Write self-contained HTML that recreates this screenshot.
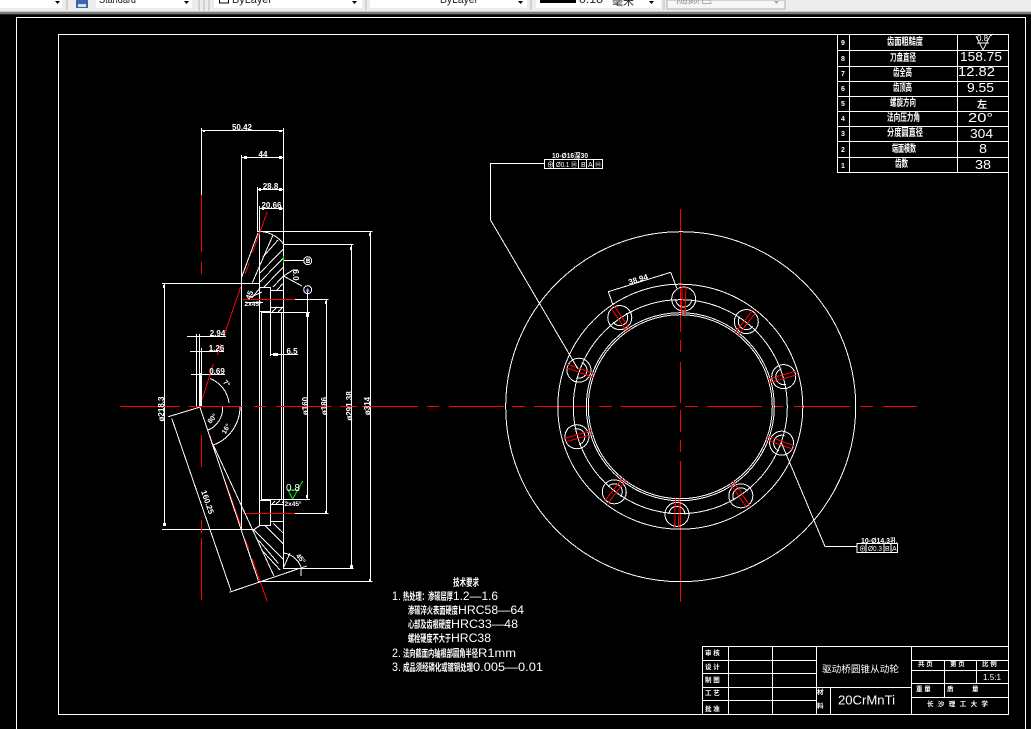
<!DOCTYPE html>
<html><head><meta charset="utf-8"><title>CAD</title>
<style>
html,body{margin:0;padding:0;background:#000;width:1031px;height:729px;overflow:hidden}
svg{display:block}
.l{stroke:#fff;stroke-width:1;fill:none;shape-rendering:crispEdges}
.a{stroke:#fff;stroke-width:1;fill:none;shape-rendering:crispEdges}
.r{stroke:#f00;stroke-width:1;fill:none;shape-rendering:crispEdges}
.rc{stroke:#f00;stroke-width:1;fill:none;shape-rendering:crispEdges}
.g{stroke:#0f0;stroke-width:1;fill:none;shape-rendering:crispEdges}
text{fill:#fff;font-family:"Liberation Sans","Noto Sans CJK SC",sans-serif}
.c{font-weight:700}
.m{text-anchor:middle}
.tb{fill:#222;font-size:11px}
</style></head><body>
<svg width="1031" height="729" viewBox="0 0 1031 729" xmlns="http://www.w3.org/2000/svg">
<defs>
<g id="h">
<circle class="a" cx="680.3" cy="299" r="12"/>
<path class="a" d="M672.3 299A8 8 0 0 0 688.3 299"/>
<path class="r" d="M678.4 286V315M682.2 286V315"/>
</g>
</defs>
<rect width="1031" height="729" fill="#000"/>
<!-- toolbar -->
<rect width="1031" height="12" fill="#ececec"/>
<rect y="11" width="1031" height="1" fill="#c8c8c8"/>
<rect y="12" width="1031" height="2" fill="#7a7a7a"/>
<rect y="14" width="1031" height="1" fill="#222"/>
<rect x="0" y="0" width="62" height="8" fill="#fff"/>
<rect x="96" y="0" width="96" height="8" fill="#fff"/>
<rect x="214" y="0" width="148" height="8" fill="#fff"/>
<rect x="370" y="0" width="157" height="8" fill="#fff"/>
<rect x="536" y="0" width="125" height="8" fill="#fff"/>
<rect x="667" y="0" width="118" height="9" fill="#f6f6f6" stroke="#b0b0b0"/>
<path d="M199 0V11M204 0V11M209 0V11M67 0V10M366 0V10M531 0V10M664 0V10" stroke="#b8b8b8" fill="none" shape-rendering="crispEdges"/>
<rect x="76" y="0" width="12" height="8" fill="#3f63a8"/>
<rect x="78" y="4" width="8" height="3" fill="#cfe0f5"/>
<path d="M55 1h5l-2.5 3zM184 1h5l-2.5 3zM352 1h5l-2.5 3zM518 1h5l-2.5 3zM649 1h5l-2.5 3z" fill="#000"/>
<path d="M774 1h5l-2.5 3z" fill="#aaa"/>
<text class="tb" x="99" y="3" textLength="37" lengthAdjust="spacingAndGlyphs">Standard</text>
<rect x="219.5" y="-4" width="9" height="7" fill="#fff" stroke="#000"/>
<text class="tb" x="232" y="3" textLength="40" lengthAdjust="spacingAndGlyphs">ByLayer</text>
<text class="tb" x="440" y="3" textLength="38" lengthAdjust="spacingAndGlyphs">ByLayer</text>
<rect x="540" y="0" width="36" height="3" fill="#000"/>
<text class="tb" x="579" y="3" textLength="24" lengthAdjust="spacingAndGlyphs">0.18</text>
<text class="tb" x="612" y="5" textLength="22" lengthAdjust="spacingAndGlyphs">毫米</text>
<text class="tb" x="676" y="3" textLength="36" lengthAdjust="spacingAndGlyphs" style="fill:#999">随颜色</text>

<!-- frames -->
<path class="l" d="M16.5 729V17.5H1025.5V729"/>
<rect class="l" x="58.5" y="34.5" width="950" height="680"/>

<!-- parameter table -->
<path class="l" d="M837.5 34.5V172.5H1008.5M849.5 34.5V172.5M957.5 34.5V172.5M837.5 50.5H1008.5M837.5 66.5H1008.5M837.5 81.5H1008.5M837.5 96.5H1008.5M837.5 111.5H1008.5M837.5 126.5H1008.5M837.5 141.5H1008.5M837.5 157.5H1008.5"/>
<g font-size="7">
<text class="c m" x="843" y="45">9</text><text class="c m" x="843" y="61">8</text><text class="c m" x="843" y="76">7</text><text class="c m" x="843" y="91">6</text><text class="c m" x="843" y="106">5</text><text class="c m" x="843" y="121">4</text><text class="c m" x="843" y="136">3</text><text class="c m" x="843" y="152">2</text><text class="c m" x="843" y="168">1</text>
</g>
<g font-size="10">
<text class="c" x="887" y="45" textLength="36" lengthAdjust="spacingAndGlyphs">齿面粗糙度</text>
<text class="c" x="890" y="61" textLength="26" lengthAdjust="spacingAndGlyphs">刀盘直径</text>
<text class="c" x="893" y="76" textLength="19" lengthAdjust="spacingAndGlyphs">齿全高</text>
<text class="c" x="893" y="91" textLength="19" lengthAdjust="spacingAndGlyphs">齿顶高</text>
<text class="c" x="890" y="106" textLength="26" lengthAdjust="spacingAndGlyphs">螺旋方向</text>
<text class="c" x="887" y="121" textLength="33" lengthAdjust="spacingAndGlyphs">法向压力角</text>
<text class="c" x="887" y="136" textLength="36" lengthAdjust="spacingAndGlyphs">分度圆直径</text>
<text class="c" x="892" y="152" textLength="24" lengthAdjust="spacingAndGlyphs">端面模数</text>
<text class="c" x="895" y="167" textLength="13" lengthAdjust="spacingAndGlyphs">齿数</text>
</g>
<g font-size="12.5">
<text x="977" y="41" font-size="8" textLength="11" lengthAdjust="spacingAndGlyphs">0.8</text>
<text x="960" y="61" textLength="42" lengthAdjust="spacingAndGlyphs">158.75</text>
<text x="958" y="76" textLength="37" lengthAdjust="spacingAndGlyphs">12.82</text>
<text x="967" y="92" textLength="27" lengthAdjust="spacingAndGlyphs">9.55</text>
<text class="c m" x="982" y="108" font-size="10">左</text>
<text x="968" y="122" textLength="25" lengthAdjust="spacingAndGlyphs">20°</text>
<text x="970" y="138" textLength="23" lengthAdjust="spacingAndGlyphs">304</text>
<text x="979" y="153" textLength="8" lengthAdjust="spacingAndGlyphs">8</text>
<text x="975" y="169" textLength="16" lengthAdjust="spacingAndGlyphs">38</text>
</g>
<path class="a" d="M976 36L983 50L990 36M977 43H989M990 36L993 34"/>

<!-- section view: dimensions -->
<path class="l" d="M201.5 128V195M283.5 128V568M201 130.5H283.5M241.5 155V530M241 157.5H283.5M257.5 187V232M257 189.5H283.5M259.5 206V526M259 208.5H283.5
M258 231.5H372.5M370.5 232V581M258 581.5H372.5M283 244.5H353.5M351.5 244V568M283 568.5H353.5M295 299.5H328.5M326.5 299V513M295 513.5H328.5M261 312.5H310M307.5 290V499M261 499.5H310
M162 283.5H260M164.5 283V526M162 529.5H255M261.5 313V500M281.5 313V500
M259.5 287.5H270.5V311.5H259.5M270.5 290.5H283M270.5 307.5H283M270.5 311V356M270 354.5H298
M259.5 500.5H270.5V525.5H259.5M270.5 504.5H283M270.5 521.5H283
M187 336.5H226M190 351.5H224M191 374.5H225M196.5 334V407M199.5 334V407M201.5 348V407M200.5 373V406"/>
<path d="M203 130h2v2h-2zM279 130h3v2h-3zM244 156h3v3h-3zM279 156h3v3h-3zM259 188h2v3h-2zM279 188h3v3h-3zM262 207h2v3h-2zM279 207h3v3h-3zM163 285h2v3h-2zM163 523h3v3h-3zM350 247h2v3h-2zM369 233h2v3h-2zM325 301h2v3h-2zM306 313h3v4h-3zM306 495h2v3h-2zM325 511h2v2h-2zM350 565h3v3h-3zM369 579h2v2h-2zM273 353h5v3h-5z" fill="#fff"/>
<!-- red axis lines -->
<path class="rc" d="M201.5 195V252M201.5 262V274M201.5 435V467M201.5 520V533M201.5 538V600"/>
<path class="r" d="M267.3 211.7L252.3 253M249.3 263L245 274M240.7 287L225 333M220.7 344L217.3 355M213.3 364L202.3 399M200 408L213 445M224 478L240.7 525M245 539L249.3 550M252.3 559L267.3 601.7"/>
<path class="rc" d="M243 299.5H295M243 513.5H295"/>
<!-- tooth -->
<path class="a" d="M258 233L241.7 277M263 232Q268 232 273 235Q279 238 283.5 244M273 235L259.3 266.7L252.3 282.7M260 288L251.7 298
M283.3 249L260 273M283.3 258L260 282M283.3 267L264 287M283.3 276L273 287M278 240L263 257M283 283.5L277 290M272 312L277 307M278 312L283 307
M283 260.5H303.5M283.5 276L293 270M283.5 276L302 286M293 270H298"/>
<circle class="a" cx="307.7" cy="260.7" r="4"/><circle class="a" cx="307.7" cy="289.7" r="4"/>
<path d="M306 259h4v1.5h-4zM306 262h4v1h-4z" fill="#6aa"/>
<path d="M307.7 287.5l2 4h-4z" fill="#7aa0ff"/>
<path class="g" d="M283.5 256V263" stroke-width="2"/>
<path class="g" d="M288 490H298M288 490L292.7 499M292.7 499L302.7 481"/>
<path class="a" d="M245 302.5H263M249 298L262 292"/>
<path class="a" d="M171.7 418.3L231 590.7M168.3 416.7L199.3 407.3M200 407.3L258.3 580.7M213.3 445L274 576M253.3 530L260 525.5M229.3 592.3L306.7 566
M265 525.7L283.3 544M273.3 523.3L283.3 533M254 530L283.3 559.3M258.3 540L278.3 563.3M263.3 551.7L280 570M283.3 568L290 553
M210 378.5A30 30 0 0 1 229 403M208.3 430A24 24 0 0 0 222.7 406.7M213.3 445A40.8 40.8 0 0 0 240 406.7M283.5 553A22 22 0 0 1 301 567M301 568V576M276 504L280 500.5M272 504L275 501M282 503L284 501"/>
<!-- center lines -->
<path class="rc" d="M120 406.5H180M189 406.5H243M254 406.5H266M276 406.5H331.5M340 406.5H357M362 406.5H418M427 406.5H439M449 406.5H504M512 406.5H525M534 406.5H590M599 406.5H612M620.5 406.5H676.5M685 406.5H698M706.5 406.5H762M772.5 406.5H783M794 406.5H850M860 406.5H873M883 406.5H917"/>
<path class="rc" d="M680.5 209V332M680.5 340V352M680.5 362V403M680.5 410V432M680.5 440V452M680.5 461V602"/>
<!-- right view -->
<g>
<circle class="a" cx="680.7" cy="406.7" r="175"/>
<circle class="a" cx="680.3" cy="406.7" r="122.5"/>
<circle class="a" cx="680.3" cy="406.7" r="107"/>
<circle class="a" cx="680.3" cy="406.7" r="94"/>
<circle class="a" cx="680.3" cy="406.7" r="92"/>
<use href="#h" transform="rotate(1.8 680.3 406.7)"/>
<use href="#h" transform="rotate(37.8 680.3 406.7)"/>
<use href="#h" transform="rotate(73.8 680.3 406.7)"/>
<use href="#h" transform="rotate(109.8 680.3 406.7)"/>
<use href="#h" transform="rotate(145.8 680.3 406.7)"/>
<use href="#h" transform="rotate(181.8 680.3 406.7)"/>
<use href="#h" transform="rotate(217.8 680.3 406.7)"/>
<use href="#h" transform="rotate(253.8 680.3 406.7)"/>
<use href="#h" transform="rotate(289.8 680.3 406.7)"/>
<use href="#h" transform="rotate(325.8 680.3 406.7)"/>
</g>
<!-- leaders -->
<path class="a" d="M544 163.5H490.5V220L578 369M781 442L825 546.5H857M608.3 291.7L670.7 272.3M608.3 291.7L613 305M670.7 272.3L676.7 288"/>
<path class="l" d="M544.5 159.5H602.5V168.5H544.5ZM553.5 160V168M578.5 160V168M586.5 160V168M593.5 160V168M857 543.5H897.5V552.5H857ZM866 544V552M884 544V552M891 544V552"/>
<text x="556" y="167" font-size="7" textLength="21" lengthAdjust="spacingAndGlyphs">Ø0.1 Ⓜ</text>
<text x="581" y="167" font-size="7">B</text><text x="588" y="167" font-size="7">A</text><text x="595" y="167" font-size="6">Ⓜ</text>
<text x="547" y="167" font-size="7">⊕</text>
<text x="552" y="158" class="c" font-size="7" textLength="36" lengthAdjust="spacingAndGlyphs">10-Ø16深30</text>
<text x="859" y="551" font-size="7">⊕</text>
<text x="868" y="551" font-size="7" textLength="14" lengthAdjust="spacingAndGlyphs">Ø0.3</text>
<text x="885" y="551" font-size="7">B</text><text x="892" y="551" font-size="7">A</text>
<text x="861" y="543" class="c" font-size="7" textLength="36" lengthAdjust="spacingAndGlyphs">10-Ø14.3孔</text>
<!-- dimension text -->
<text class="m c" x="242" y="130" font-size="8">50.42</text>
<text class="m c" x="263" y="157" font-size="8">44</text>
<text class="m c" x="270.5" y="189" font-size="8">28.8</text>
<text class="m c" x="271.5" y="208" font-size="8">20.66</text>
<text class="m c" x="217.5" y="336" font-size="8">2.94</text>
<text class="m c" x="216.5" y="351" font-size="8">1.26</text>
<text class="m c" x="292" y="354" font-size="8">6.5</text>
<text class="m c" x="217" y="374" font-size="8">0.69</text>
<text x="286" y="491" font-size="10">0.8</text>
<text class="m c" x="253" y="306" font-size="6.5">2x45°</text>
<text class="m c" x="293" y="506" font-size="6.5">2x45°</text>
<text class="m c" font-size="8" transform="translate(252 296) rotate(-70)">45</text>
<text class="m c" font-size="8" transform="translate(293 275) rotate(90)">6.0</text>
<text class="m c" font-size="6" x="308" y="263">B</text>
<text class="m c" font-size="8" transform="translate(164 409) rotate(-90)">ø218.3</text>
<text class="m c" font-size="8" transform="translate(308 406) rotate(-90)">ø160</text>
<text class="m c" font-size="8" transform="translate(327 406) rotate(-90)">ø186</text>
<text class="m c" font-size="8" transform="translate(352 406) rotate(-90)">ø291.38</text>
<text class="m c" font-size="8" transform="translate(370 406) rotate(-90)">ø314</text>
<text class="m c" font-size="8" transform="translate(205 503) rotate(71)">160.25</text>
<text class="m c" font-size="8" transform="translate(639 282) rotate(-17)">38.94</text>
<text class="m c" font-size="7" transform="translate(225 385) rotate(45)">7°</text>
<text class="m c" font-size="7" transform="translate(214 420) rotate(-50)">80°</text>
<text class="m c" font-size="7" transform="translate(228 430) rotate(-60)">16°</text>
<text class="m c" font-size="7" transform="translate(299 560) rotate(50)">45°</text>
<!-- technical requirements -->
<g font-size="10">
<text class="c" x="453" y="586" textLength="26" lengthAdjust="spacingAndGlyphs">技术要求</text>
<text class="c" x="403" y="600" textLength="50" lengthAdjust="spacingAndGlyphs">热处理：渗碳层厚</text>
<text class="c" x="408" y="614" textLength="50" lengthAdjust="spacingAndGlyphs">渗碳淬火表面硬度</text>
<text class="c" x="408" y="628" textLength="43" lengthAdjust="spacingAndGlyphs">心部及齿根硬度</text>
<text class="c" x="408" y="642" textLength="43" lengthAdjust="spacingAndGlyphs">螺栓硬度不大于</text>
<text class="c" x="403" y="657" textLength="75" lengthAdjust="spacingAndGlyphs">法向截面内轴根部圆角半径</text>
<text class="c" x="403" y="671" textLength="70" lengthAdjust="spacingAndGlyphs">成品须经磷化或镀铜处理</text>
</g>
<g font-size="12">
<text x="392" y="600" textLength="9" lengthAdjust="spacingAndGlyphs">1.</text>
<text x="453" y="600" textLength="45" lengthAdjust="spacingAndGlyphs">1.2—1.6</text>
<text x="458" y="614" textLength="66" lengthAdjust="spacingAndGlyphs">HRC58—64</text>
<text x="451" y="628" textLength="67" lengthAdjust="spacingAndGlyphs">HRC33—48</text>
<text x="451" y="642" textLength="40" lengthAdjust="spacingAndGlyphs">HRC38</text>
<text x="392" y="657" textLength="9" lengthAdjust="spacingAndGlyphs">2.</text>
<text x="478" y="657" textLength="38" lengthAdjust="spacingAndGlyphs">R1mm</text>
<text x="392" y="671" textLength="9" lengthAdjust="spacingAndGlyphs">3.</text>
<text x="473" y="671" textLength="70" lengthAdjust="spacingAndGlyphs">0.005—0.01</text>
</g>
<!-- title block -->
<path class="l" d="M702.5 714V646.5H1008.5M702.5 660.5H816.5M702.5 673.5H816.5M702.5 687.5H911.5M702.5 700.5H816.5M728.5 646V714M772.5 646V714M816.5 646V714M911.5 646V714M911.5 660.5H1008.5M911.5 670.5H1008.5M911.5 683.5H1008.5M911.5 697.5H1008.5M944.5 660V697M976.5 660V683M830.5 687V714"/>
<g font-size="6.5">
<text class="c" x="705" y="655">审 核</text>
<text class="c" x="705" y="669">设 计</text>
<text class="c" x="705" y="682">制 图</text>
<text class="c" x="705" y="695">工 艺</text>
<text class="c" x="705" y="711">批 准</text>
<text class="c" x="918" y="666">共 页</text>
<text class="c" x="950" y="666">第 页</text>
<text class="c" x="982" y="666">比 例</text>
<text class="c" x="916" y="691">重 量</text>
<text class="c" x="947" y="691">质</text><text class="c" x="972" y="691">量</text>
<text class="c" x="817" y="694">材</text><text class="c" x="817" y="708">料</text>
<text x="927" y="706" textLength="61" lengthAdjust="spacing" class="c">长沙理工大学</text>
</g>
<text x="822" y="672.5" font-size="9.5" textLength="77" lengthAdjust="spacingAndGlyphs" fill="#ddd">驱动桥圆锥从动轮</text>
<text x="838" y="704.5" font-size="12.5" textLength="57" lengthAdjust="spacingAndGlyphs">20CrMnTi</text>
<text x="983" y="680" font-size="8.5" textLength="18" lengthAdjust="spacingAndGlyphs">1.5:1</text>
</svg>
</body></html>
